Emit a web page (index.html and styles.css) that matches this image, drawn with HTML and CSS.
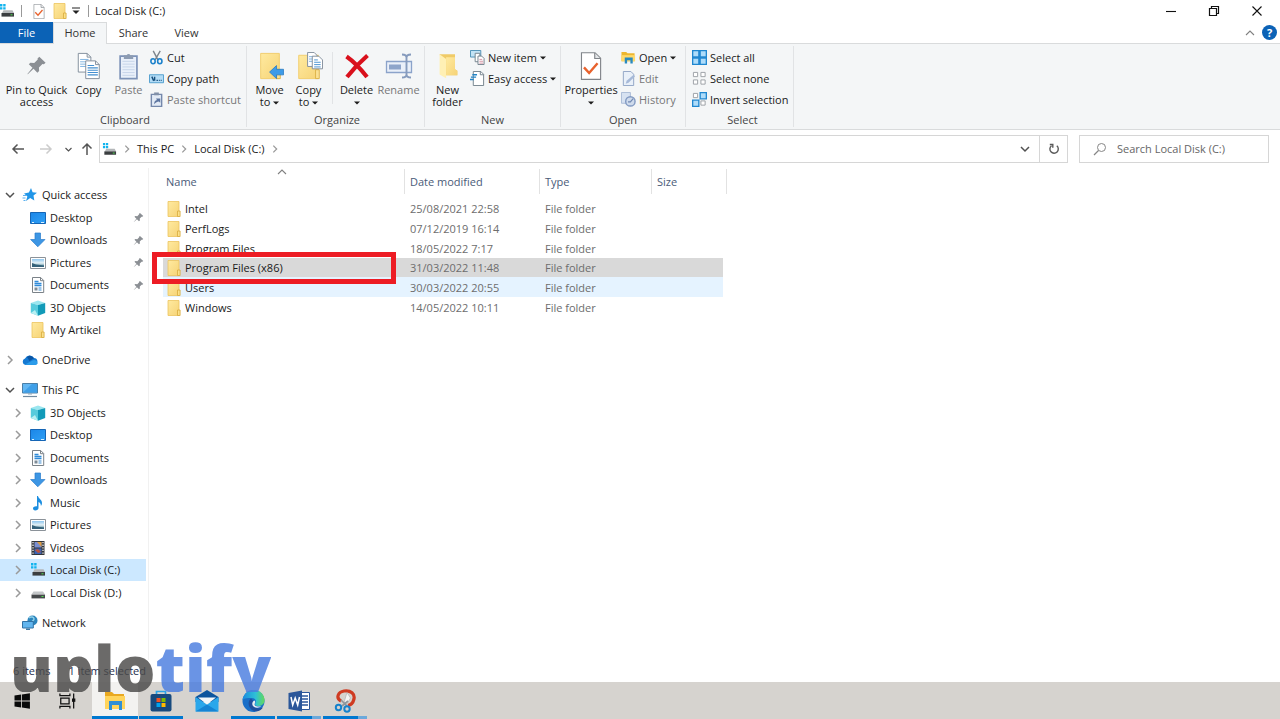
FILE: index.html
```html
<!DOCTYPE html>
<html lang="en">
<head>
<meta charset="utf-8">
<title>Local Disk (C:)</title>
<link rel="stylesheet" href="styles.css">
</head>
<body>
<svg class="sprite" aria-hidden="true">
  <defs>
    <linearGradient id="g-blue" x1="0" y1="0" x2="1" y2="1"><stop offset="0" stop-color="#1b86e8"/><stop offset="1" stop-color="#2fa0f5"/></linearGradient>
    <linearGradient id="g-fold" x1="0" y1="0" x2="1" y2="1"><stop offset="0" stop-color="#ffeaa0"/><stop offset="1" stop-color="#f6d376"/></linearGradient>
    <linearGradient id="g-sky" x1="0" y1="0" x2="0" y2="1"><stop offset="0" stop-color="#8fc6ee"/><stop offset="0.5" stop-color="#e6f2f6"/><stop offset="1" stop-color="#2f6f86"/></linearGradient>
    <linearGradient id="g-edge" x1="0" y1="0" x2="1" y2="0"><stop offset="0" stop-color="#1b8be0"/><stop offset="0.6" stop-color="#2fc1d6"/><stop offset="1" stop-color="#63da5a"/></linearGradient>
  </defs>
  <symbol id="i-right" viewBox="0 0 12 12"><path d="M4 2l4 4-4 4" fill="none" stroke="#9a9a9a" stroke-width="1.5"/></symbol>
  <symbol id="i-down" viewBox="0 0 12 12"><path d="M2 4l4 4 4-4" fill="none" stroke="#505050" stroke-width="1.5"/></symbol>
  <symbol id="i-up" viewBox="0 0 12 12"><path d="M2 8l4-4 4 4" fill="none" stroke="#808080" stroke-width="1.1"/></symbol>
  <symbol id="i-caret" viewBox="0 0 6 4"><path d="M0 0.5h6l-3 3z" fill="#1c1c1c"/></symbol>
  <symbol id="i-folder" viewBox="0 0 16 16"><path d="M2 .5h11v15H2z" fill="url(#g-fold)" stroke="#ecc45e" stroke-width=".8"/><path d="M11.5 10h2.6v5.5h-2.6z" fill="#fbe08a" stroke="#d8ab3c" stroke-width=".8"/></symbol>
  <symbol id="i-drivec" viewBox="0 0 16 16"><path d="M1 1h2.4v2.4H1zM4.2 1h2.4v2.4H4.2zM1 4.2h2.4v2.4H1zM4.2 4.2h2.4v2.4H4.2z" fill="#12b4ee"/><path d="M4.5 7.2h9l1.5 2.8H3z" fill="#b4b7b9"/><path d="M2.5 10H15v3.6H2.5z" fill="#3b3e40"/><path d="M11.5 11.3h2v1h-2z" fill="#4fe04f"/></symbol>
  <symbol id="i-drived" viewBox="0 0 16 16"><path d="M3.5 6.6h9.500l2 3H1.500z" fill="#c3c6c8"/><path d="M1.500 9.600H15v3.800H1.500z" fill="#46494b"/><path d="M11.500 11h2v1h-2z" fill="#4fe04f"/></symbol>
  <symbol id="i-star" viewBox="0 0 16 16"><path d="M9 1l1.600 4.200 4.400.6-3.500 2.800.8 4.900-4.100-2.400L4 14l1.400-4.500L2 6.600l4.900-1z" fill="#2196e8"/><path d="M1 8.500h3M.500 11h3M1.500 13.500h2" stroke="#5ab0ef"/></symbol>
  <symbol id="i-desktop" viewBox="0 0 16 16"><path d="M.5 2.500h15v11H.500z" fill="url(#g-blue)" stroke="#1565b5"/><path d="M2 12.500h2M11 12.500h3" stroke="#d8efff"/></symbol>
  <symbol id="i-download" viewBox="0 0 16 16"><path d="M5 1h5.500v6.500H15l-7.200 7.300L.600 7.500H5z" fill="#3d96e4" stroke="#2a7ccb" stroke-width=".7"/></symbol>
  <symbol id="i-pictures" viewBox="0 0 16 16"><path d="M.5 2.500h15v11H.500z" fill="#fff" stroke="#8b9299"/><path d="M2 4h12v8H2z" fill="url(#g-sky)"/><path d="M2 12V8l4 1.500 8 1V12z" fill="#35627a"/></symbol>
  <symbol id="i-document" viewBox="0 0 16 16"><path d="M2.500.500h8.200l3 3v12H2.500z" fill="#fff" stroke="#7b8288"/><path d="M10.500.500v3.200h3" fill="none" stroke="#7b8288"/><path d="M4.500 4.500h4M4.500 6.500h7M4.500 8.500h7" stroke="#2f8ad8" stroke-width="1.300"/><path d="M8.500 11h3M8.500 13h3" stroke="#3a8bd0"/><path d="M4.500 10.500h3v3h-3z" fill="#7d8b96"/></symbol>
  <symbol id="i-3d" viewBox="0 0 16 16"><path d="M.800 3L8 .500l7.200 2.500L8 5z" fill="#9be6ef"/><path d="M.800 3L8 5v10.800l-7.200-2.800z" fill="#56cbdc"/><path d="M8 5l7.200-2v10L8 15.800z" fill="#119ab8"/><path d="M.800 13L5 10l3 5.800z" fill="#b8eff2"/></symbol>
  <symbol id="i-cloud" viewBox="0 0 16 16"><path d="M3.500 13A3.300 3.300 0 0 1 3 6.600 5 5 0 0 1 12 6a3.600 3.600 0 0 1 1 7z" fill="#1579d2"/><path d="M5 5a4.500 4.500 0 0 1 7 1.200L7.500 9z" fill="#0b55a4"/><path d="M2.500 12.800L11 8.200a3.200 3.200 0 0 1 4.500 3 2 2 0 0 1-2 1.800z" fill="#2b9cea"/></symbol>
  <symbol id="i-pc" viewBox="0 0 16 16"><path d="M.500 1.500h15v9.500H.500z" fill="#63b7f3" stroke="#4a7fa8"/><path d="M1 10.500L10 2h5v8.500z" fill="#3f9fe8"/><path d="M6 11.500h4v1H6z" fill="#90a4b4"/><path d="M1 14.500h14" stroke="#728ba0" stroke-width="1.200"/></symbol>
  <symbol id="i-music" viewBox="0 0 16 16"><path d="M8 1c.5 3 4 3.500 4 7 0 1.500-.7 2.500-1.200 3 .3-2-.8-3.500-2.300-4v6c0 1.500-1.500 2.500-3.200 2.500S3 14.500 3 13.300s1.500-2.300 4-2V1z" fill="#1c8ee0"/></symbol>
  <symbol id="i-video" viewBox="0 0 16 16"><path d="M1.500 1h13v14h-13z" fill="#33363a"/><path d="M4.500 2h7v5.500h-7z" fill="#7a8fd2"/><path d="M4.500 8.500h7V14h-7z" fill="#3c65b5"/><path d="M7 2h4.500v5z" fill="#df9b3c"/><path d="M5 10l3-1 3 3-3 1z" fill="#bb543f"/><path d="M3 2v12M13 2v12" stroke="#fff" stroke-width="1.200" stroke-dasharray="1.300 1.300"/></symbol>
  <symbol id="i-network" viewBox="0 0 16 16"><circle cx="10.500" cy="5.500" r="5" fill="#2c85bd"/><path d="M7 3c2-2 5-1 5 1s-3 2-2 4" fill="none" stroke="#8fd0e9" stroke-width="1.500"/><path d="M.500 6.500h10.800V13H.500z" fill="#61b5ee" stroke="#3273a5"/><path d="M4 13.500h4V15H4z" fill="#3d79a5"/></symbol>
  <symbol id="i-pin" viewBox="0 0 12 12"><path d="M7.600 1l3.600 3.400-1 .9-.8-.2-2 2 .1 2.100-1 .9-2.200-2.200L1 11l-.2-.2 2.900-3.500-2.100-2 .9-.9 2.200.1 2-2L6.600 2z" fill="#8b8f94"/></symbol>
  <symbol id="i-page" viewBox="0 0 24 30"><path d="M1.800.800h14.500l6 6v22.500H1.800z" fill="#fff" stroke="#808489" stroke-width="1.200"/><path d="M16 1v6h6" fill="#e3e6e8" stroke="#808489" stroke-width="1.200"/><path d="M4.500 16.500l5.500 6 9-10.500" fill="none" stroke="#e8622d" stroke-width="2.600"/></symbol>
  <symbol id="i-copy" viewBox="0 0 26 30"><path d="M1.500 1.500h9.500l4 4v16H1.500z" fill="#fff" stroke="#7f8b99"/><path d="M11 1.500v4h4" fill="none" stroke="#7f8b99"/><path d="M3.500 8h9M3.500 10.500h9M3.500 13h9M3.500 15.500h9" stroke="#7bb0df"/><path d="M9.500 9.500h10.500l4 4v15H9.500z" fill="#fff" stroke="#7f8b99"/><path d="M20 9.500v4h4" fill="none" stroke="#7f8b99"/><path d="M11.500 14.500h7M11.500 17h11M11.500 19.500h11M11.500 22h11M11.500 24.500h11" stroke="#448fd0" stroke-width="1.200"/></symbol>
  <symbol id="i-paste" viewBox="0 0 22 30"><path d="M1.500 4.500h18v24h-18z" fill="#e9f0fa" stroke="#7c92b8" stroke-width="1.800"/><path d="M4 10h13M4 13h13M4 16h13M4 19h13M4 22h13M4 25h13" stroke="#c5d3e8"/><path d="M5.500 3.500h3a2.200 2.200 0 0 1 4 0h3v4h-10z" fill="#8d9cb3"/></symbol>
  <symbol id="i-cut" viewBox="0 0 16 16"><path d="M4.500 1l5 9.500M12 1L6.500 10.500" stroke="#7d858d" stroke-width="1.500"/><ellipse cx="4.300" cy="12" rx="2.300" ry="2.700" fill="none" stroke="#1c82cc" stroke-width="1.700"/><ellipse cx="11.500" cy="12" rx="2.300" ry="2.700" fill="none" stroke="#1c82cc" stroke-width="1.700"/></symbol>
  <symbol id="i-path" viewBox="0 0 16 16"><path d="M.500 4h15v8.500H.500z" fill="#b3dcf6" stroke="#4d9dcd"/><path d="M3 6l2 4.500M6 6v4.500M8 10h1.500M10.500 10h1M12.500 10h1" stroke="#164f7d" stroke-width="1.500"/></symbol>
  <symbol id="i-shortcut" viewBox="0 0 16 16"><path d="M2.500 2.500h11v13h-11z" fill="#e2eaf5" stroke="#7488ab" stroke-width="1.500"/><path d="M5.500.500h5v3h-5z" fill="#8190a8"/><path d="M5.500 13c0-3 1-4 3-4.500L7.500 7H12v4.500L10.500 10c-2 0-3 1-5 3z" fill="#5c75a0"/></symbol>
  <symbol id="i-move" viewBox="0 0 30 30"><path d="M5 1.500h20v27H5z" fill="url(#g-fold)" stroke="#f1cc6b"/><path d="M22 19h4v9.500h-4z" fill="#fae193" stroke="#ddb247"/><path d="M14.500 21.500l7.500-7v4h7.500v6H22v4z" fill="#3d9be8" stroke="#2478c0" stroke-width=".8"/></symbol>
  <symbol id="i-copyto" viewBox="0 0 30 30"><path d="M4 3.500h21v25H4z" fill="url(#g-fold)" stroke="#f1cc6b"/><path d="M22 19h4v9.500h-4z" fill="#fae193" stroke="#ddb247"/><path d="M13.500.500h7l3 3v12h-10z" fill="#fff" stroke="#7f8b99"/><path d="M15 5h5M15 7.500h5M15 10h5" stroke="#7bb0df"/><path d="M18.500 4.500h7l4 4v9.500h-11z" fill="#fff" stroke="#7f8b99"/><path d="M20.500 8.500h4M20.500 11h7M20.500 13.500h7M20.500 16h7" stroke="#448fd0"/></symbol>
  <symbol id="i-delete" viewBox="0 0 28 28"><path d="M3.500 4.500C10 9 17 16 24 25M24.500 3.500C17 10 11 16 4 25" fill="none" stroke="#d9101c" stroke-width="4.200"/></symbol>
  <symbol id="i-rename" viewBox="0 0 28 28"><path d="M1.500 9.500h25v11h-25z" fill="#eaf0f9" stroke="#8ba3ca" stroke-width="1.300"/><path d="M4 12.500h12v5H4z" fill="#8ea5ca"/><path d="M17 2.500c3 0 4.500.5 4.500 3v17c0 2.500-1.500 3-4.500 3M26 2.500c-3 0-4.500.5-4.500 3v17c0 2.500 1.500 3 4.500 3" fill="none" stroke="#869bbd" stroke-width="1.900"/></symbol>
  <symbol id="i-newfolder" viewBox="0 0 24 30"><path d="M3 2.500h16.500v16L22 20v5H9z" fill="#f0cb68"/><path d="M3 2.500l7 5V28L3 24z" fill="#fff0b5"/><path d="M10 5.500h9.500v13L22 20v5H10z" fill="url(#g-fold)"/></symbol>
  <symbol id="i-newitem" viewBox="0 0 16 16"><path d="M.500.500h11v7H.500z" fill="#c3e3f5" stroke="#4c8fb5"/><path d="M5.500 3.500h5v9h-5z" fill="#fff" stroke="#71808b"/><path d="M8.500 6.500h4l2.500 2.500v6.500H8.500z" fill="#fff" stroke="#71808b"/><path d="M10 10h3M10 12h4M10 14h4" stroke="#d491a2"/></symbol>
  <symbol id="i-easy" viewBox="0 0 16 16"><path d="M3.500.500h8l3 3v12h-11z" fill="#fff" stroke="#71808b"/><path d="M11 .500v3.500h3.500" fill="none" stroke="#71808b"/><path d="M2.500 4h5M1 6.500h5.500M0 9h4" stroke="#2384c6" stroke-width="1.500"/></symbol>
  <symbol id="i-open" viewBox="0 0 16 16"><path d="M.500 2h5L7 3.500h7.500V12H.500z" fill="#edb72f"/><path d="M.500 5.500h14.500V12H.500z" fill="#ffd96b"/><path d="M4 8h8.500v6.500H10V11H6.500v3.500H4z" fill="#298abf"/></symbol>
  <symbol id="i-edit" viewBox="0 0 16 16"><path d="M2.500.500h8l3 3v12h-11z" fill="#e9f0f9" stroke="#8fa3c4"/><path d="M5 13.500l1-3 7.500-6.500 1.500 1.500L8 12.500z" fill="#a6b9d8"/></symbol>
  <symbol id="i-history" viewBox="0 0 16 16"><path d="M.500.500h9.500v11.500H.500z" fill="#d7e2f1" stroke="#a9bad5"/><circle cx="10" cy="10" r="5" fill="#cfdbec" stroke="#8199c2" stroke-width="1.500"/><path d="M13 7l-3 3.500H7.500" fill="none" stroke="#7188b2" stroke-width="1.300"/></symbol>
  <symbol id="i-selall" viewBox="0 0 16 16"><path d="M.700.700h6.600v6.600H.700zM8.700.700h6.600v6.600H8.700zM.700 8.700h6.600v6.600H.700zM8.700 8.700h6.600v6.600H8.700z" fill="#aedcfa" stroke="#2087d0" stroke-width="1.400"/></symbol>
  <symbol id="i-selnone" viewBox="0 0 16 16"><path d="M1.500 1.500h4.500V6H1.500zM9.500 1.500H14V6H9.500zM1.500 9.500H6V14H1.500zM9.500 9.500H14V14H9.500z" fill="#fff" stroke="#9a9fa4"/></symbol>
  <symbol id="i-selinv" viewBox="0 0 16 16"><path d="M1.500 1.500H6V6H1.500zM9.500 9.500H14V14H9.500z" fill="#fff" stroke="#9a9fa4"/><path d="M8.700.700h6.600v6.600H8.700zM.700 8.700h6.600v6.600H.700z" fill="#aedcfa" stroke="#2087d0" stroke-width="1.400"/></symbol>
  <symbol id="i-back" viewBox="0 0 14 14"><path d="M13 7H2M6.500 2.500L2 7l4.500 4.500" fill="none" stroke="currentColor" stroke-width="1.500"/></symbol>
</svg>

<div class="window">
  <header class="titlebar">
    <svg class="ico drive"><use href="#i-drivec"/></svg>
    <span class="bar"></span>
    <button class="quick" aria-label="Properties"><svg class="page-s"><use href="#i-page"/></svg></button>
    <button class="quick" aria-label="New folder"><svg class="ico"><use href="#i-folder"/></svg></button>
    <button class="more" aria-label="Customize toolbar"><svg viewBox="0 0 8 8"><path d="M0 1h8" stroke="#222"/><path d="M.500 3.500h7L4 7z" fill="#222"/></svg></button>
    <span class="bar"></span>
    <h1>Local Disk (C:)</h1>
    <div class="winbtns">
      <button aria-label="Minimize"><svg viewBox="0 0 12 12"><path d="M1 6.500h10" stroke="#111" stroke-width="1.100"/></svg></button>
      <button aria-label="Restore"><svg viewBox="0 0 12 12"><path d="M1.500 3.500h7v7h-7zM3.500 3.500v-2h7v7h-2" fill="none" stroke="#111" stroke-width="1.200"/></svg></button>
      <button aria-label="Close"><svg viewBox="0 0 12 12"><path d="M1.500 1.500l9 9M10.500 1.500l-9 9" stroke="#111" stroke-width="1.100"/></svg></button>
    </div>
  </header>

  <div class="tabs">
    <button class="tab file">File</button>
    <button class="tab home">Home</button>
    <button class="tab">Share</button>
    <button class="tab">View</button>
    <div class="tabs-end">
      <button aria-label="Collapse ribbon"><svg class="chev"><use href="#i-up"/></svg></button>
      <button class="help" aria-label="Help">?</button>
    </div>
  </div>

  <div class="ribbon">
    <section class="group clipboard">
      <div class="tools">
        <button class="big pinbtn"><svg><use href="#i-pin"/></svg>Pin to Quick<br>access</button>
        <button class="big copybtn"><svg><use href="#i-copy"/></svg>Copy</button>
        <button class="big pastebtn off"><svg><use href="#i-paste"/></svg>Paste</button>
        <div class="smalls">
          <button><svg><use href="#i-cut"/></svg>Cut</button>
          <button><svg><use href="#i-path"/></svg>Copy path</button>
          <button class="off"><svg><use href="#i-shortcut"/></svg>Paste shortcut</button>
        </div>
      </div>
      <h2>Clipboard</h2>
    </section>
    <section class="group organize">
      <div class="tools">
        <button class="big"><svg><use href="#i-move"/></svg>Move<br>to <svg class="caret"><use href="#i-caret"/></svg></button>
        <button class="big"><svg><use href="#i-copyto"/></svg>Copy<br>to <svg class="caret"><use href="#i-caret"/></svg></button>
        <span class="split"></span>
        <button class="big"><svg><use href="#i-delete"/></svg>Delete<br><svg class="caret"><use href="#i-caret"/></svg></button>
        <button class="big wide off"><svg><use href="#i-rename"/></svg>Rename</button>
      </div>
      <h2>Organize</h2>
    </section>
    <section class="group new">
      <div class="tools">
        <button class="big wide"><svg><use href="#i-newfolder"/></svg>New<br>folder</button>
        <div class="smalls">
          <button><svg><use href="#i-newitem"/></svg>New item <svg class="caret"><use href="#i-caret"/></svg></button>
          <button><svg><use href="#i-easy"/></svg>Easy access <svg class="caret"><use href="#i-caret"/></svg></button>
        </div>
      </div>
      <h2>New</h2>
    </section>
    <section class="group open">
      <div class="tools">
        <button class="big props"><svg><use href="#i-page"/></svg>Properties<br><svg class="caret"><use href="#i-caret"/></svg></button>
        <div class="smalls">
          <button><svg><use href="#i-open"/></svg>Open <svg class="caret"><use href="#i-caret"/></svg></button>
          <button class="off"><svg><use href="#i-edit"/></svg>Edit</button>
          <button class="off"><svg><use href="#i-history"/></svg>History</button>
        </div>
      </div>
      <h2>Open</h2>
    </section>
    <section class="group select">
      <div class="tools">
        <div class="smalls">
          <button><svg><use href="#i-selall"/></svg>Select all</button>
          <button><svg><use href="#i-selnone"/></svg>Select none</button>
          <button><svg><use href="#i-selinv"/></svg>Invert selection</button>
        </div>
      </div>
      <h2>Select</h2>
    </section>
  </div>

  <div class="address">
    <button class="back" aria-label="Back"><svg><use href="#i-back"/></svg></button>
    <button class="forward" aria-label="Forward"><svg><use href="#i-back"/></svg></button>
    <button class="recent" aria-label="Recent locations"><svg><use href="#i-down"/></svg></button>
    <button class="upbtn" aria-label="Up"><svg><use href="#i-back"/></svg></button>
    <nav class="crumbs" aria-label="Path">
      <svg class="ico"><use href="#i-drivec"/></svg>
      <svg class="chev"><use href="#i-right"/></svg>
      <a href="#">This PC</a>
      <svg class="chev"><use href="#i-right"/></svg>
      <a href="#">Local Disk (C:)</a>
      <svg class="chev"><use href="#i-right"/></svg>
      <button class="history" aria-label="Previous locations"><svg class="chev"><use href="#i-down"/></svg></button>
      <button class="refresh" aria-label="Refresh"><svg viewBox="0 0 12 12"><path d="M8.800 2.800A4.200 4.200 0 1 1 3.500 2.700M1.800 1.500h3v3.200" fill="none" stroke="#5a5a5a" stroke-width="1.400"/></svg></button>
    </nav>
    <label class="search">
      <svg viewBox="0 0 14 14"><circle cx="8.500" cy="5.500" r="4" fill="none" stroke="#868686"/><path d="M5.500 8.500L1 13" stroke="#868686" stroke-width="1.200"/></svg>
      <input type="text" placeholder="Search Local Disk (C:)" aria-label="Search Local Disk (C:)">
    </label>
  </div>

  <div class="main">
    <nav class="tree" aria-label="Folders">
      <section>
        <a class="row" href="#"><svg class="chev"><use href="#i-down"/></svg><svg class="ico"><use href="#i-star"/></svg>Quick access</a>
        <ul>
          <li><a class="row sub" href="#"><span class="chev"></span><svg class="ico"><use href="#i-desktop"/></svg>Desktop<svg class="pin"><use href="#i-pin"/></svg></a></li>
          <li><a class="row sub" href="#"><span class="chev"></span><svg class="ico"><use href="#i-download"/></svg>Downloads<svg class="pin"><use href="#i-pin"/></svg></a></li>
          <li><a class="row sub" href="#"><span class="chev"></span><svg class="ico"><use href="#i-pictures"/></svg>Pictures<svg class="pin"><use href="#i-pin"/></svg></a></li>
          <li><a class="row sub" href="#"><span class="chev"></span><svg class="ico"><use href="#i-document"/></svg>Documents<svg class="pin"><use href="#i-pin"/></svg></a></li>
          <li><a class="row sub" href="#"><span class="chev"></span><svg class="ico"><use href="#i-3d"/></svg>3D Objects</a></li>
          <li><a class="row sub" href="#"><span class="chev"></span><svg class="ico"><use href="#i-folder"/></svg>My Artikel</a></li>
        </ul>
      </section>
      <section>
        <a class="row" href="#"><svg class="chev"><use href="#i-right"/></svg><svg class="ico"><use href="#i-cloud"/></svg>OneDrive</a>
      </section>
      <section>
        <a class="row" href="#"><svg class="chev"><use href="#i-down"/></svg><svg class="ico"><use href="#i-pc"/></svg>This PC</a>
        <ul>
          <li><a class="row sub" href="#"><svg class="chev"><use href="#i-right"/></svg><svg class="ico"><use href="#i-3d"/></svg>3D Objects</a></li>
          <li><a class="row sub" href="#"><svg class="chev"><use href="#i-right"/></svg><svg class="ico"><use href="#i-desktop"/></svg>Desktop</a></li>
          <li><a class="row sub" href="#"><svg class="chev"><use href="#i-right"/></svg><svg class="ico"><use href="#i-document"/></svg>Documents</a></li>
          <li><a class="row sub" href="#"><svg class="chev"><use href="#i-right"/></svg><svg class="ico"><use href="#i-download"/></svg>Downloads</a></li>
          <li><a class="row sub" href="#"><svg class="chev"><use href="#i-right"/></svg><svg class="ico"><use href="#i-music"/></svg>Music</a></li>
          <li><a class="row sub" href="#"><svg class="chev"><use href="#i-right"/></svg><svg class="ico"><use href="#i-pictures"/></svg>Pictures</a></li>
          <li><a class="row sub" href="#"><svg class="chev"><use href="#i-right"/></svg><svg class="ico"><use href="#i-video"/></svg>Videos</a></li>
          <li><a class="row sub current" href="#"><svg class="chev"><use href="#i-right"/></svg><svg class="ico"><use href="#i-drivec"/></svg>Local Disk (C:)</a></li>
          <li><a class="row sub" href="#"><svg class="chev"><use href="#i-right"/></svg><svg class="ico"><use href="#i-drived"/></svg>Local Disk (D:)</a></li>
        </ul>
      </section>
      <section>
        <a class="row" href="#"><span class="chev"></span><svg class="ico"><use href="#i-network"/></svg>Network</a>
      </section>
    </nav>

    <div class="files">
      <table>
        <colgroup><col class="c-name"><col class="c-date"><col class="c-type"><col class="c-size"></colgroup>
        <thead>
          <tr><th>Name<svg class="chev sort"><use href="#i-up"/></svg></th><th>Date modified</th><th>Type</th><th>Size</th></tr>
        </thead>
        <tbody>
          <tr><td><svg class="ico"><use href="#i-folder"/></svg>Intel</td><td>25/08/2021 22:58</td><td>File folder</td><td></td></tr>
          <tr><td><svg class="ico"><use href="#i-folder"/></svg>PerfLogs</td><td>07/12/2019 16:14</td><td>File folder</td><td></td></tr>
          <tr><td><svg class="ico"><use href="#i-folder"/></svg>Program Files</td><td>18/05/2022 7:17</td><td>File folder</td><td></td></tr>
          <tr class="selected"><td><svg class="ico"><use href="#i-folder"/></svg>Program Files (x86)<span class="marker"></span></td><td>31/03/2022 11:48</td><td>File folder</td><td></td></tr>
          <tr class="hover"><td><svg class="ico"><use href="#i-folder"/></svg>Users</td><td>30/03/2022 20:55</td><td>File folder</td><td></td></tr>
          <tr><td><svg class="ico"><use href="#i-folder"/></svg>Windows</td><td>14/05/2022 10:11</td><td>File folder</td><td></td></tr>
        </tbody>
      </table>
    </div>
  </div>

  <footer class="status"><span>6 items</span><span>1 item selected</span></footer>
</div>

<div class="taskbar">
  <button aria-label="Start"><svg viewBox="0 0 24 24"><path d="M3 5.500l8-1.200v7.200H3zM12 4.200l9.500-1.500v8.800H12zM3 12.500h8v7.200l-8-1.200zM12 12.500h9.500v8.800L12 19.800z" fill="#0a0a0a"/></svg></button>
  <button aria-label="Task view"><svg viewBox="0 0 24 24"><path d="M4.500 8.500h10v7h-10zM3.500 3v2.500h12V3M3.500 21v-2.500h12V21M20 3v18" fill="none" stroke="#111" stroke-width="1.500"/><path d="M18 9h4v4h-4z" fill="#111"/></svg></button>
  <button class="active" aria-label="File Explorer"><svg viewBox="0 0 24 24"><path d="M2 3h7l2 2h10v15H2z" fill="#e9a820"/><path d="M2 7h20v13H2z" fill="#ffd45c"/><path d="M6 12h13v9h-3v-5H9v5H6z" fill="#2f8fd6"/></svg></button>
  <button class="running" aria-label="Store"><svg viewBox="0 0 24 24"><path d="M7.500 7V2.500h9V7" fill="none" stroke="#2ba3e6" stroke-width="1.700"/><rect x="1.500" y="5" width="21" height="17.500" rx="2" fill="#174a7e"/><path d="M7.500 9H11.500v4h-4z" fill="#f25022"/><path d="M12.500 9h4v4h-4z" fill="#7fba00"/><path d="M7.500 14h4v4h-4z" fill="#00a4ef"/><path d="M12.500 14h4v4h-4z" fill="#ffb900"/></svg></button>
  <button aria-label="Mail"><svg viewBox="0 0 24 24"><path d="M.500 8L12 1l11.500 7v5H.500z" fill="#0d559e"/><path d="M.500 8L12 15.500 23.500 8v14.500H.500z" fill="#2aa7eb"/><path d="M.500 22.500L12 15.500l11.500 7z" fill="#1584d4"/><path d="M3 8.500h18l-9 7z" fill="#f3f7fa"/></svg></button>
  <button class="running" aria-label="Edge"><svg viewBox="0 0 24 24"><circle cx="12.500" cy="12" r="11" fill="#1a6fc8"/><path d="M1.500 11C2.500 5 7 1 13 1c6.500 0 10.500 5 10.500 10 0 4-3 6-6.500 6-2.500 0-3.500-1.500-2.500-3 1-2 0-5-4-5-4 0-7 0-9 2z" fill="url(#g-edge)"/><path d="M10 9.500c-4 3-3 10.500 3 12.500 4 1 7-.5 9-3.500-4 2-11.500 0-8.500-5z" fill="#1f4f9d"/><path d="M13.500 11.500c2 2-1 3.500.5 5 1 1 4 1.500 6 .5-1 2-6 2.500-8 0-1.500-2-.5-5 1.500-5.500z" fill="#e9eef2"/></svg></button>
  <button class="running multi" aria-label="Word"><svg viewBox="0 0 24 24"><path d="M11 3.500h11.500v17H11z" fill="#fff" stroke="#2b579a"/><path d="M14 7h7M14 10h7M14 13h7M14 16h7" stroke="#2b579a" stroke-width="1.400"/><path d="M1.500 4L15 1.500v21L1.500 20z" fill="#2b579a"/><path d="M4 8l1.700 8L8.200 9l2.500 7L12.500 8" fill="none" stroke="#fff" stroke-width="1.500"/></svg></button>
  <button class="running multi" aria-label="Snip"><svg viewBox="0 0 24 24"><path d="M8 12C2.500 9 5 3 11 2c7-1 11 3 10 8-1 4-3 6-6 6.500" fill="none" stroke="#cf3b22" stroke-width="3.200"/><path d="M11 13.500l3-10 3.500 5.500-3 5z" fill="#f4f4f4" stroke="#aaa" stroke-width=".6"/><path d="M8 11l6 6M15 12l-6 5" stroke="#8d969d" stroke-width="1.700"/><circle cx="5.500" cy="18.500" r="2.700" fill="none" stroke="#1682cc" stroke-width="2"/><circle cx="14" cy="20" r="2.700" fill="none" stroke="#1682cc" stroke-width="2"/></svg></button>
  <div class="watermark"><span>uplo</span><span class="tint">tify</span></div>
</div>
</body>
</html>
```
FILE: styles.css
```css
* { box-sizing: border-box; }
body {
  margin: 0;
  min-height: 100vh;
  display: flex;
  flex-direction: column;
  background: #fff;
  color: #1a1a1a;
  font: 11px/14px "Open Sans", "Noto Sans", sans-serif;
}
button {
  margin: 0;
  padding: 0;
  border: 0;
  background: none;
  color: inherit;
  font: inherit;
}
a { color: inherit; text-decoration: none; }
ul { margin: 0; padding: 0; list-style: none; }
h1, h2 { margin: 0; font: inherit; }
svg { flex: none; }
.sprite { position: absolute; width: 0; height: 0; }
.ico { width: 16px; height: 16px; }
.chev { width: 12px; height: 12px; flex: none; }
.caret { width: 6px; height: 4px; }

.window { flex: 1; display: flex; flex-direction: column; }

/* Title bar */
.titlebar { display: flex; align-items: center; height: 22px; }
.titlebar .drive { margin-left: -1px; }
.bar { width: 1px; height: 12px; margin: 0 6px; background: #999; }
.quick { width: 21px; height: 16px; }
.quick svg { display: block; margin: 0 auto; }
.page-s { width: 12px; height: 15px; }
.more { width: 12px; height: 8px; display: flex; justify-content: center; }
.more svg { width: 8px; height: 8px; }
.winbtns { display: flex; margin-left: auto; padding-right: 2px; }
.winbtns button { width: 43px; height: 20px; }
.winbtns svg { width: 12px; height: 12px; display: block; margin: 0 auto; }

/* Ribbon tabs */
.tabs { display: flex; height: 22px; border-bottom: 1px solid #d9dbdc; }
.tab { width: 53px; height: 21px; color: #333; }
.tab.file { background: #0b62b6; color: #fff; }
.tab.home {
  width: 54px;
  height: 22px;
  padding-bottom: 2px;
  background: #f4f6f7;
  border: 1px solid #d9dbdc;
  border-bottom: 0;
}
.tabs-end { display: flex; align-items: center; gap: 6px; margin-left: auto; padding-right: 3px; }
.tabs-end svg { display: block; }
.help {
  width: 15px;
  height: 15px;
  border-radius: 50%;
  background: #0b62b6;
  color: #fff;
  font-weight: 700;
}

/* Ribbon */
.ribbon { display: flex; height: 86px; background: #f4f6f7; border-bottom: 1px solid #d9dbdc; }
.group {
  display: flex;
  flex-direction: column;
  justify-content: space-between;
  margin: 2px 0;
  padding-top: 1px;
  border-right: 1px solid #e1e3e5;
}
.group h2 { text-align: center; color: #444; line-height: 14px; }
.tools { display: flex; align-items: flex-start; }
.clipboard { width: 247px; padding-left: 4px; }
.organize { width: 178px; padding-left: 3px; }
.new { width: 136px; }
.open { width: 125px; }
.select { width: 108px; padding-left: 6px; }
.big { width: 39px; text-align: center; line-height: 12px; white-space: nowrap; display: block; }
.big > svg:first-child { display: block; width: 28px; height: 28px; margin: 5px auto 4px; }
.big .caret { vertical-align: middle; }
.pinbtn { width: 65px; }
.pinbtn > svg:first-child { width: 21px; height: 21px; margin: 8px auto; }
.pastebtn { width: 41px; }
.wide { width: 45px; }
.props { width: 60px; }
.off { color: #777; }
.split { width: 1px; height: 52px; margin: 5px 4px; background: #e1e3e5; }
.smalls { display: flex; flex-direction: column; }
.smalls button { display: flex; align-items: center; gap: 3px; height: 21px; white-space: nowrap; }
.smalls button > svg:first-child { width: 15px; height: 15px; }

/* Address bar */
.address { display: flex; align-items: center; height: 38px; padding: 0 11px 0 4px; }
.address > button { height: 26px; display: grid; place-items: center; color: #555; }
.address > button svg { width: 14px; height: 14px; }
.address .back { width: 28px; }
.address .forward { width: 27px; color: #ccc; }
.address .forward svg { transform: rotate(180deg); }
.address .recent { width: 18px; }
.address .recent svg { width: 9px; height: 9px; }
.address .upbtn { width: 20px; margin-right: 2px; }
.address .upbtn svg { transform: rotate(90deg); }
.crumbs {
  flex: 1;
  display: flex;
  align-items: center;
  height: 28px;
  padding-left: 2px;
  border: 1px solid #d6d6d6;
}
.crumbs .ico { width: 15px; height: 15px; }
.crumbs > .chev { width: 10px; height: 10px; margin: 0 5px; }
.crumbs button { align-self: stretch; width: 28px; display: grid; place-items: center; }
.crumbs .history { margin-left: auto; }
.crumbs .refresh { border-left: 1px solid #d6d6d6; }
.refresh svg { width: 12px; height: 12px; }
.search {
  display: flex;
  align-items: center;
  gap: 10px;
  width: 190px;
  height: 28px;
  margin-left: 11px;
  padding-left: 13px;
  border: 1px solid #d6d6d6;
}
.search svg { width: 14px; height: 14px; }
.search input { width: 100%; min-width: 0; padding: 0; border: 0; outline: 0; font: inherit; }
.search input::placeholder { color: #666; opacity: 1; }

/* Folder tree */
.main { flex: 1; display: flex; }
.tree {
  display: flex;
  flex-direction: column;
  gap: 8px;
  width: 149px;
  padding: 16px 2px 0 0;
  border-right: 1px solid #f1f1f1;
}
.row { display: flex; align-items: center; height: 22px; padding-left: 4px; }
.row .chev { margin-right: 6px; }
.row .ico { margin-right: 4px; }
.row.sub { height: 100%; padding-left: 12px; }
.tree li { height: 22px; }
.tree li:nth-child(odd) { height: 23px; }
.current { background: #cce8ff; }
.pin { width: 11px; height: 11px; margin-left: auto; margin-right: 2px; }

/* File list */
.files { flex: 1; padding: 1px 0 0 14px; }
table { table-layout: fixed; width: 560px; border-collapse: collapse; }
.c-name { width: 242px; }
.c-date { width: 135px; }
.c-type { width: 112px; }
th, td { padding: 0 0 0 5px; text-align: left; font-weight: 400; line-height: 19px; white-space: nowrap; }
th { position: relative; height: 25px; color: #4a5b78; }
th::after {
  content: "";
  position: absolute;
  top: 0;
  right: 0;
  width: 1px;
  height: 25px;
  background: #e2e2e2;
}
th:last-child::after { right: -4px; }
th:first-child, td:first-child { padding-left: 3px; }
.sort { position: absolute; top: -3px; left: 113px; }
thead::after { content: ""; display: block; height: 5px; }
tbody tr { height: 20px; }
tbody tr:nth-child(3n+1) { height: 19px; }
td { color: #6d6d6d; }
td:first-child { position: relative; color: #1a1a1a; }
td .ico { margin-right: 3px; vertical-align: -4px; }
.selected { background: #d9d9d9; }
.hover { background: #e5f3ff; }
.marker {
  position: absolute;
  z-index: 1;
  inset: -6px 9px -7px -11px;
  border: 5px solid #ed1c24;
}

/* Status bar */
.status { display: flex; gap: 18px; height: 22px; padding-left: 13px; line-height: 22px; color: #1d2f4f; }

/* Taskbar */
.taskbar { position: relative; display: flex; height: 37px; background: #d6d3cf; }
.taskbar button { width: 46px; height: 37px; padding-top: 4px; border-bottom: 3px solid transparent; }
.taskbar svg { display: block; width: 24px; height: 24px; margin: 0 auto; }
.taskbar button:first-child { width: 44px; }
.taskbar button:nth-child(-n+2) svg { width: 20px; height: 20px; }
.taskbar .active { margin-left: 2px; background: #f3f2f0; border-color: #0078d0; }
.taskbar .running { border-image: linear-gradient(90deg, transparent 4px, #0078d0 4px 42px, transparent 42px) 3; }
.taskbar .multi { border-image: linear-gradient(90deg, transparent 4px, #0078d0 4px 34px, #6ca9db 34px 42px, transparent 42px) 3; }

/* Wordmark laid over the window and the taskbar */
.watermark {
  position: absolute;
  left: 10px;
  bottom: 27px;
  height: 58px;
  overflow: hidden;
  color: #4b4a49;
  opacity: 0.82;
  font: 800 64px/68px "Open Sans", sans-serif;
  pointer-events: none;
}
.watermark .tint { color: #4a7de0; }
```
